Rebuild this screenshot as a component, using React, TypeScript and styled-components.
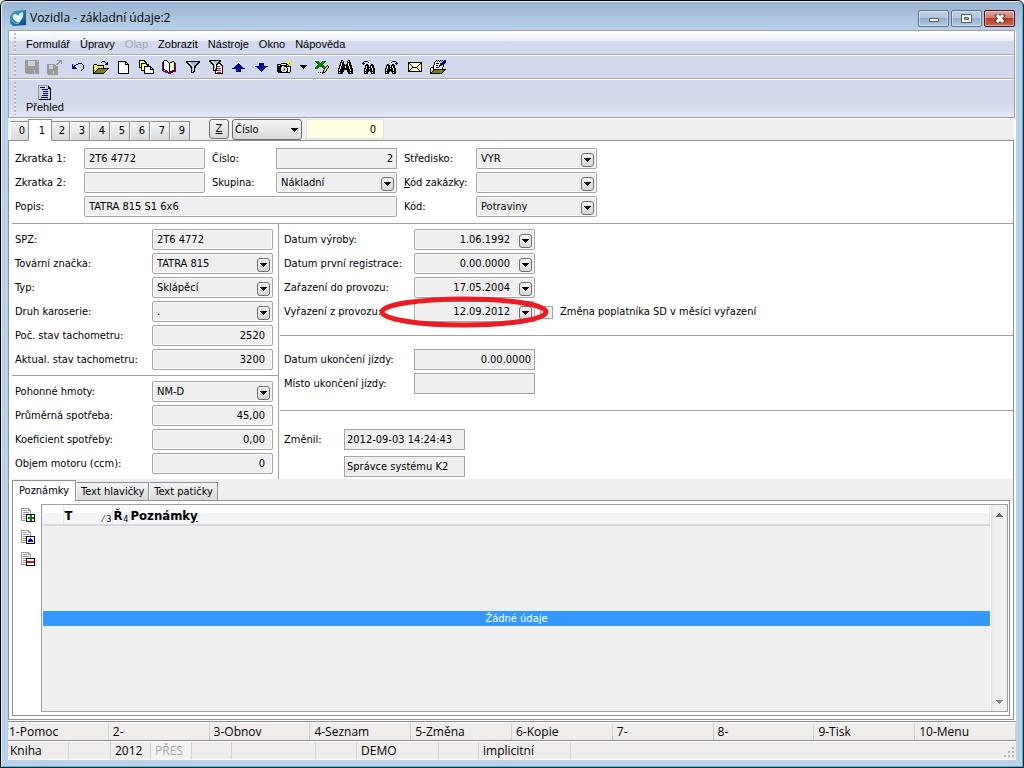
import React from "react";
import styled, { createGlobalStyle, css } from "styled-components";

const UI = `"DejaVu Sans Condensed", "DejaVu Sans", "Noto Sans", sans-serif`;
const SEGOE = `"Open Sans", "Noto Sans", sans-serif`;
const ARIAL = `"Liberation Sans", Arial, sans-serif`;

const Global = createGlobalStyle`
  * { box-sizing: border-box; }
  body { margin: 0; background: #fff; font: 11px/16px ${UI}; color: #000; }
  button, input, select { font: inherit; color: inherit; margin: 0; border-radius: 0; }
`;

/* ---------- pixel icons ---------- */

const palette: Record<string, string> = {
  k: "#000000",
  g: "#9a9a9a",
  l: "#d0d0d0",
  w: "#ffffff",
  y: "#ffff80",
  Y: "#ffe600",
  o: "#808000",
  b: "#000090",
  B: "#0000ff",
  t: "#8cc8c8",
  r: "#e01010",
  G: "#008000",
  p: "#800080",
};

const Svg = styled.svg`
  display: block;
  flex: none;
`;

function Pixels({ art }: { art: string[] }) {
  const w = Math.max(...art.map((r) => r.length));
  return (
    <Svg width={w} height={art.length} shapeRendering="crispEdges" aria-hidden="true">
      {art.flatMap((row, y) =>
        [...row].map((c, x) =>
          palette[c] ? <rect key={`${x}-${y}`} x={x} y={y} width={1} height={1} fill={palette[c]} /> : null
        )
      )}
    </Svg>
  );
}

const art: Record<string, string[]> = {
  save: [
    "gggggggggggggg",
    "ggglllllllgg.g",
    "ggglllllllgggg",
    "ggglllllllgggg",
    "ggglllllllgggg",
    "ggglllllllgggg",
    "gggggggggggggg",
    "gggggggggggggg",
    "gggggggggggggg",
    "gggggggggggggg",
    "ggggggggglgggg",
    "ggggggggglgggg",
    "ggggggggglgggg",
    ".ggggggggggggg",
  ],
  saveAs: [
    "..........ggggg",
    "............ggg",
    "...........gg.g",
    "..........gg..g",
    "gggggggg.gg....",
    "ggllllggg......",
    "ggllllggggg....",
    "ggllllggggg....",
    "ggllllggggg....",
    "ggggggggggg....",
    "ggggggggggg....",
    "gggggglgggg....",
    "gggggglgggg....",
    "gggggglgggg....",
    ".gggggggggg....",
  ],
  undo: [
    "......bbbb..",
    "b...bb....b.",
    "b.bb.......b",
    "bbb........b",
    "bbbb.......b",
    "bbbbb......b",
    "..........b.",
    ".........b..",
  ],
  open: [
    ".........kkk....",
    "........k...k.k.",
    ".............kk.",
    ".kkk........kkk.",
    "kyYykkkkkkk.....",
    "kYyYyYyYyYk.....",
    "kyYyYyYyYyk.....",
    "kYyYykkkkkkkkkkk",
    "kyYykoooooooook.",
    "kYykoooooooook..",
    "kykoooooooook...",
    "kkoooooooook....",
    "kkkkkkkkkkk.....",
  ],
  doc: [
    "kkkkkkkk...",
    "kwwwwwwkk..",
    "kwwwwwwkwk.",
    "kwwwwwwkkkk",
    "kwwwwwwwwwk",
    "kwwwwwwwwwk",
    "kwwwwwwwwwk",
    "kwwwwwwwwwk",
    "kwwwwwwwwwk",
    "kwwwwwwwwwk",
    "kwwwwwwwwwk",
    "kwwwwwwwwwk",
    "kkkkkkkkkkk",
  ],
  docs: [
    "kkkkkk.........",
    "kyyyykk........",
    "kyyyyykk.......",
    "kykkkkkk.......",
    "kykyyyykkk.....",
    "kykyyyyykk.....",
    "kykyykkkkkkk...",
    "kkkyykwwwwwkk..",
    "..kyykwwwwwkwk.",
    "..kyykwwwwwkkkk",
    "..kkkkwwwwwwwwk",
    ".....kwwwwwwwwk",
    ".....kwwwwwwwwk",
    ".....kkkkkkkkkk",
  ],
  book: [
    "..kkk..........",
    ".kwwwk....kk...",
    "pkwwwwk.kkwyk..",
    "pkwwwwwkwwyykp.",
    "pkwwwwwkwywykp.",
    "pkwwwwwkwwyykp.",
    "pkwwwwwkwywykp.",
    "pkwwwwwkwwyykp.",
    "pkwwwwwkwywykp.",
    "pkkwwwwkwwyykp.",
    "ppwkkwwkwykkkp.",
    ".ppppkwkkkpppp.",
    "...ppppkppp....",
    "......ppp......",
  ],
  filter: [
    "kkkkkkkkkkkkkk",
    "kktwttttttttkk",
    ".kktwttttttkk.",
    "..kktwttttkk..",
    "...kktwttkk...",
    "....kktwkk....",
    "....kktwkk....",
    ".....ktwk.....",
    ".....ktwk.....",
    ".....ktwk.....",
    ".....kwkk.....",
    ".....kkk......",
  ],
  filterDoc: [
    "kkkkkkkkkkkk..",
    "kktwttttttkk..",
    ".kktwttttkk...",
    "..kktwttkkkk..",
    "...kktwkkwwkk.",
    "....ktwkwwwwkk",
    "....ktwkrrrwwk",
    "....ktwkwwwwwk",
    "....ktwkrrrrwk",
    "....kwkkwwwwwk",
    "....kkkkrrrrwk",
    "......kwwwwwwk",
    "......kwrrrrwk",
    "......kkkkkkkk",
  ],
  up: [
    "......b......",
    ".....bbb.....",
    "....bbbbb....",
    "...bbbbbbb...",
    "..bbbbbbbbb..",
    "bbbbbbbbbbbbb",
    "....bbbbb....",
    "....bbbbb....",
    "....bbbbb....",
  ],
  down: [
    "....bbbbb....",
    "....bbbbb....",
    "....bbbbb....",
    "bbbbbbbbbbbbb",
    "..bbbbbbbbb..",
    "...bbbbbbb...",
    "....bbbbb....",
    ".....bbb.....",
    "......b......",
  ],
  camera: [
    "..........Y.Y.Y",
    "...........YYY.",
    "....kkkkkkYYoYY",
    "kkkkwwwwwkkYYY.",
    "kllkkkkkkkYkY.Y",
    "kkkkkwwkkkkkkk.",
    "kkkktwllwkwlwk.",
    "kkkkwlttlwkwwk.",
    "kkkkwltklwkwlk.",
    "kkkkwlttlwkwwk.",
    "kkkkkwllwkkwlk.",
    ".kkkkkkkkkkkk..",
  ],
  more: ["kkkkkkk", ".kkkkk.", "..kkk..", "...k..."],
  excel: [
    "GGGG...GGGG....",
    ".GGGG.GGGG.....",
    "..GGGGGGG......",
    "...GGGGG.......",
    "..GGGGGGG...k..",
    ".GGGGGGGGG.kYk.",
    "GGGG...GGGkYYk.",
    "GGG.....GkYYk..",
    ".........kYk...",
    "........kYYk...",
    "........kYk....",
    "...k.k.kkk.....",
    ".......k.......",
  ],
  find: [
    "...kk.....kk...",
    "...kwk...kwk...",
    "..kkkk...kkkk..",
    "..kwkk...kwkk..",
    "..kwkkk.kkwkk..",
    ".kkwkkkkkkwkkk.",
    ".kwkkkkwkkkwkk.",
    ".kwkkkkwkkkwkk.",
    "kkwkkkkkkkkwkkk",
    "kwkkkkkkkkkkwkk",
    "kwkkkk...kkkwkk",
    "kkkkkk...kkkkkk",
    "kwkkk.....kkwkk",
    "kkkkk.....kkkkk",
  ],
  findPrev: [
    "..kkkk........",
    ".k....k.......",
    "kkk...........",
    ".k..kk...kk...",
    "...kkkk.kkkk..",
    "...kwkk.kwkk..",
    "...kwkkkkwkk..",
    "..kkwkkwkkwkk.",
    "..kwkkkkkkwkk.",
    "..kwkkkkkkwkk.",
    "..kkkkk.kkkkk.",
    "..kwkk...kwkk.",
    "..kkkk...kkkk.",
  ],
  findNext: [
    ".......kkkk...",
    "......k....k..",
    "..........kkk.",
    "..kk...kk..k..",
    ".kkkk.kkkk....",
    ".kwkk.kwkk....",
    ".kwkkkkwkk....",
    "kkwkkwkkwkk...",
    "kwkkkkkkwkk...",
    "kwkkkkkkwkk...",
    "kkkkk.kkkkk...",
    "kwkk...kwkk...",
    "kkkk...kkkk...",
  ],
  mail: [
    "kkkkkkkkkkkkkk",
    "kkwywywywywykk",
    "kwkwywywywykyk",
    "kywkwywywykywk",
    "kwywkwywykwywk",
    "kywykkkkkywywk",
    "kwykywywykwywk",
    "kykwywywywkywk",
    "kkwywywywywkwk",
    "kkkkkkkkkkkkkk",
  ],
  note: [
    "......k.k.k.k.bb",
    ".....kwkwkwkwbbb",
    "....kwwwwwwwbBbb",
    "....kwkkkwkbBbb.",
    "....kwwwwwkkbb..",
    "...kwwkkwkkkwk..",
    "...kwwwwwkwwwk..",
    ".kkkwwkkkwwwk...",
    "kYykwwwwwwwwk...",
    "kyYkkkkkkkkkkkkk",
    "kYykooooooooook.",
    "kykooooooooook..",
    "kkooooooooook...",
    "kkkkkkkkkkkk....",
  ],
  overview: [
    "ggggggggggg..",
    "glllllllllkg.",
    "glbbbbblllkkg",
    "glllllllllkkk",
    "glllbbbbbbllk",
    "glllllllllllk",
    "gllllbbbbbllk",
    "glllllllllllk",
    "gllllbbbbbllk",
    "glllllllllllk",
    "glllbbbbbbllk",
    "glllllllllllk",
    "gllbbbbbbbllk",
    "glllllllllllk",
    "gkkkkkkkkkkkk",
  ],
};

function noteArt(mark: string[]) {
  const page = ["gwwwwk", "gwgggk", "gwwwwk", "gwgggk", "gwwwwk", "gggggk", ".....k"];
  return [
    "gggggggg......",
    "gwwwwwwgg.....",
    "gwggggwggg....",
    "gwwwwwwwwg....",
    "gwggggggwg....",
    "gwwwwwwwwg....",
    "gwgggkkkkkkkkk",
    ...mark.map((m, i) => page[i] + m + "k"),
  ];
}
const addArt = noteArt(["wwwGGww", "wwwGGww", "wGGGGGG", "wGGGGGG", "wwwGGww", "wwwGGww", "kkkkkkk"]);
const editArt = noteArt(["wwwwwww", "wwwBwww", "wwBBBww", "wBBBBBw", "wBBBBBw", "wwwwwww", "kkkkkkk"]);
const delArt = noteArt(["wwwwwww", "wwwwwww", "rrrrrrr", "rrrrrrr", "wwwwwww", "wwwwwww", "kkkkkkk"]);

/* ---------- window ---------- */

const Window = styled.div`
  display: flex;
  flex-direction: column;
  min-height: 100vh;
  padding: 0 7px 7px;
  border: 1px solid #0a0a0a;
  border-radius: 6px 6px 0 0;
  background: linear-gradient(#98b3d1 0, #b9d1ea 30px);
  box-shadow: inset 1px 1px 0 #e6eff8, inset -1px -1px 0 #1fcdf0;
`;

const TitleBar = styled.header`
  display: flex;
  align-items: center;
  height: 29px;
  padding: 5px 1px 0 2px;
  gap: 4px;
`;

const Title = styled.h1`
  flex: 1;
  margin: 0;
  font: 12px/18px ${SEGOE};
`;

const WinButtons = styled.div`
  display: flex;
  gap: 2px;
`;

const WinButton = styled.button<{ $close?: boolean }>`
  display: flex;
  align-items: center;
  justify-content: center;
  width: 31px;
  height: 17px;
  padding: 0;
  border: 1px solid ${(p) => (p.$close ? "#431422" : "#5d7088")};
  border-radius: 2px;
  background: ${(p) =>
    p.$close
      ? "linear-gradient(#e3a296 0, #d2796a 50%, #b83a22 50%, #cf6a4c 100%)"
      : "linear-gradient(#bdd0e5 0, #b0c6de 50%, #94afcb 50%, #b0cae4 100%)"};
  box-shadow: inset 0 0 0 1px rgba(255, 255, 255, 0.45);
`;

const Client = styled.div`
  flex: 1;
  display: flex;
  flex-direction: column;
  background: #fff;
`;

const Bars = styled.div`
  margin-right: 1px;
  border: 1px solid #a0a0a0;
  border-bottom-color: #9a9aa2;
`;

const Bar = styled.div<{ $kind: "menu" | "tools" | "big" }>`
  display: flex;
  align-items: center;
  padding-left: 5px;
  background: #d3d9ec;
  ${(p) =>
    p.$kind === "menu" &&
    css`
      height: 24px;
      border-bottom: 1px solid #a8a8a8;
      background: linear-gradient(#fff 0, #e9edf5 10px, #d3d9ec 10px);
    `}
  ${(p) =>
    p.$kind === "tools" &&
    css`
      height: 24px;
      border-top: 1px solid #fff;
      border-bottom: 1px solid #a8a8a8;
    `}
  ${(p) =>
    p.$kind === "big" &&
    css`
      height: 38px;
      border-top: 1px solid #fff;
      background: linear-gradient(#d3d9ec 60%, #e1e7f6);
    `}
`;

const Grip = styled.span`
  align-self: stretch;
  width: 2px;
  margin: 2px 0;
  background: repeating-linear-gradient(#b4b9c8 0 2px, #f4f6fb 2px 3px, transparent 3px 4px);
`;

const Menu = styled.nav`
  display: flex;
  gap: 10px;
  padding: 2px 0 0 10px;
  font: 11px/16px ${ARIAL};
`;

const MenuItem = styled.button`
  padding: 0;
  border: 0;
  background: none;
  &:disabled {
    color: #a3a8b5;
  }
`;

const Tools = styled.div`
  display: flex;
  padding-left: 4px;
`;

const ToolButton = styled.button<{ $narrow?: boolean }>`
  display: flex;
  align-items: center;
  justify-content: center;
  width: ${(p) => (p.$narrow ? 15 : 23)}px;
  height: 20px;
  padding: 0;
  border: 0;
  background: none;
`;

const BigButton = styled.button`
  display: flex;
  flex-direction: column;
  align-items: center;
  margin-left: 10px;
  padding: 2px 0 0;
  border: 0;
  background: none;
  font: 11px/14px ${ARIAL};
`;

/* ---------- page tabs ---------- */

const PageStrip = styled.div`
  display: flex;
  align-items: flex-end;
  height: 22px;
  margin: 1px 2px 0 0;
  padding-left: 2px;
  border-bottom: 1px solid #8c8e9c;
  background: #efefef;
`;

const tabFace = css<{ $active?: boolean }>`
  border: 1px solid #8c8e9c;
  border-bottom: 0;
  border-left-color: #fff;
  background: linear-gradient(#f4f4f4, #d9d9d9);
  ${(p) =>
    p.$active &&
    css`
      position: relative;
      border-left-color: #8c8e9c;
      background: #fff;
    `}
`;

const PageTab = styled.button<{ $active?: boolean }>`
  ${tabFace}
  width: ${(p) => (p.$active ? 24 : 20)}px;
  height: ${(p) => (p.$active ? 22 : 19)}px;
  margin: ${(p) => (p.$active ? "0 -2px -1px" : "0")};
  padding: 0 0 0 4px;
  line-height: 18px;
`;

const ZButton = styled.button`
  width: 20px;
  height: 20px;
  margin: 0 3px 1px 19px;
  padding: 0;
  border: 1px solid #707070;
  border-radius: 3px;
  background: linear-gradient(#f6f6f6, #d8d8d8);
  text-decoration: underline;
`;

const Stack = styled.span<{ $width?: number }>`
  display: inline-grid;
  width: ${(p) => p.$width ?? 121}px;
  align-items: center;
  & > * {
    grid-area: 1 / 1;
  }
`;

const OrderSelect = styled.select`
  width: 100%;
  height: 21px;
  padding: 0 2px;
  appearance: none;
  border: 1px solid #707070;
  border-radius: 3px;
  background: linear-gradient(#f4f4f4, #d9d9d9);
`;

const Arrow = styled.span`
  justify-self: end;
  margin-right: 4px;
  pointer-events: none;
`;

const OrderValue = styled.input`
  width: 78px;
  height: 20px;
  margin: 0 0 1px 4px;
  padding: 0 7px;
  border: 1px solid #dde1ea;
  background: #ffffe1;
  text-align: right;
`;

/* ---------- form ---------- */

const Page = styled.main`
  flex: 1;
  display: flex;
  flex-direction: column;
  margin-right: 2px;
  padding: 0 0 3px 3px;
  border: solid #8c8e9c;
  border-width: 0 1px 1px;
`;

const Head = styled.section`
  display: grid;
  grid-template-columns: 69px 121px 71px 121px 79px 121px;
  row-gap: 3px;
  padding: 7px 0 6px 3px;
  border-bottom: 1px solid #a0a0a0;
`;

const Wide = styled.div`
  grid-column: span 3;
  display: grid;
`;

const Body = styled.div`
  display: grid;
  grid-template-columns: 267px 1fr;
`;

const Left = styled.div`
  border-right: 1px solid #a0a0a0;
`;

const Right = styled.div`
  padding-left: 1px;
`;

const Group = styled.section<{ $cols: string; $pad: string; $gap?: number; $rule?: boolean }>`
  display: grid;
  grid-template-columns: ${(p) => p.$cols};
  row-gap: ${(p) => p.$gap ?? 3}px;
  padding: ${(p) => p.$pad};
  border-bottom: ${(p) => (p.$rule ? "1px solid #a0a0a0" : "0")};
`;

const Label = styled.label<{ $indent?: boolean }>`
  padding-left: ${(p) => (p.$indent ? 7 : 0)}px;
  line-height: 21px;
  white-space: nowrap;
`;

const Field = styled.input<{ $num?: boolean; $square?: boolean; $date?: boolean }>`
  width: 100%;
  height: 21px;
  padding: 0 ${(p) => (p.$date ? 24 : p.$square ? 3 : 7)}px 0 ${(p) => (p.$square ? 2 : 4)}px;
  border: 1px solid #a5a5a9;
  border-radius: ${(p) => (p.$square ? 0 : 2)}px;
  background: #efefef;
  box-shadow: ${(p) => (p.$square ? "none" : "inset 0 0 0 1px #fafafa")};
  text-align: ${(p) => (p.$num || p.$date ? "right" : "left")};
`;

const Combo = styled.select`
  width: 100%;
  height: 21px;
  padding: 0 20px 0 4px;
  appearance: none;
  border: 1px solid #a5a5a9;
  border-radius: 2px;
  background: #efefef;
  box-shadow: inset 0 0 0 1px #fafafa;
`;

const DropFace = styled.span`
  display: flex;
  align-items: center;
  justify-content: center;
  justify-self: end;
  width: 13px;
  height: 14px;
  margin: 2px 3px 0 0;
  border: 1px solid #707070;
  border-radius: 3px;
  background: linear-gradient(#f6f6f6, #d6d6d6);
  pointer-events: none;
`;

const DropButton = styled(DropFace).attrs({ as: "button" })`
  padding: 0;
  pointer-events: auto;
`;

const CheckLabel = styled.label`
  display: flex;
  align-items: center;
  gap: 7px;
  padding: 1px 0 0 5px;
  white-space: nowrap;
`;

const Check = styled.input`
  width: 13px;
  height: 13px;
  appearance: none;
  border: 1px solid #a5a5a9;
  background: #efefef;
`;

const Marked = styled(Stack)`
  position: relative;
`;

const Ring = styled.svg`
  position: absolute;
  left: -36px;
  top: -5px;
  pointer-events: none;
`;

/* ---------- notes ---------- */

const NoteTabs = styled.div`
  display: flex;
  align-items: flex-end;
  height: 21px;
  background: #efefef;
`;

const NoteTab = styled.button<{ $active?: boolean }>`
  ${tabFace}
  height: ${(p) => (p.$active ? 21 : 18)}px;
  margin-bottom: ${(p) => (p.$active ? "-1px" : "0")};
  padding: 0 ${(p) => (p.$active ? "6px" : "4px")};
  line-height: 16px;
`;

const NotePanel = styled.section`
  flex: 1;
  display: flex;
  margin-right: 3px;
  padding: 3px 1px 3px 0;
  border: 1px solid #8c8e9c;
`;

const NoteTools = styled.div`
  display: flex;
  flex-direction: column;
  gap: 8px;
  width: 28px;
  padding: 4px 0 0 8px;
`;

const NoteButton = styled.button`
  width: 14px;
  height: 14px;
  padding: 0;
  border: 0;
  background: none;
`;

const Listing = styled.div`
  flex: 1;
  display: flex;
  border: 1px solid #a0a0a0;
  background: #efefef;
`;

const ListMain = styled.div`
  flex: 1;
  display: flex;
  flex-direction: column;
  padding-left: 1px;
`;

const HeadTable = styled.table`
  width: 100%;
  height: 21px;
  table-layout: fixed;
  border-collapse: collapse;
  border-bottom: 2px solid #d9d9d9;
  background: linear-gradient(#fff 40%, #f2f4f7 40%);
  font: bold 13px/16px ${UI};
  th {
    padding: 3px 0 0 1px;
    text-align: left;
    border-right: 1px solid #e6e8ec;
    white-space: nowrap;
  }
`;

const HeadCell = styled.span`
  display: flex;
  justify-content: space-between;
  align-items: flex-end;
  height: 16px;
`;

const SortMark = styled.small`
  font: 9px/10px ${UI};
`;

const EmptyArea = styled.div`
  flex: 1;
  display: flex;
  flex-direction: column;
  justify-content: center;
`;

const EmptyRow = styled.div`
  background: #3399ff;
  color: #fff;
  line-height: 15px;
  text-align: center;
`;

const Scroll = styled.div`
  display: flex;
  flex-direction: column;
  justify-content: space-between;
  align-items: center;
  width: 17px;
  padding: 8px 0 7px;
  border-left: 1px solid #fafafa;
  background: linear-gradient(90deg, #e6e6e6, #f0f0f0 30%, #efefef);
`;

/* ---------- status ---------- */

const Status = styled.footer`
  margin-top: 1px;
  border-top: 1px solid #8a8a92;
  font: 12px/16px ${SEGOE};
`;

const Keys = styled.div`
  display: grid;
  grid-template-columns: repeat(10, 1fr);
  height: 19px;
  border: solid;
  border-color: #fff #fff #8a8a92;
  border-width: 1px 0;
  background: #f0eceb;
`;

const Key = styled.button`
  padding: 0 0 0 4px;
  border: 0;
  border-right: 1px solid #d2cfcf;
  background: none;
  text-align: left;
  &:first-child {
    padding-left: 1px;
  }
`;

const Info = styled.div`
  display: grid;
  grid-template-columns: 61px 42px 40px 41px 40px 84px 41px 82px 40px 92px 1fr;
  height: 19px;
  border: solid #fff;
  border-width: 1px 0;
  background: #f0eceb;
  line-height: 17px;
`;

const InfoCell = styled.span<{ $dim?: boolean }>`
  padding-left: 4px;
  border-right: 1px solid #d2cfcf;
  color: ${(p) => (p.$dim ? "#a8a8a8" : "#000")};
  background: ${(p) => (p.$dim ? "#f2f2f2" : "none")};
  &:first-child {
    padding-left: 2px;
  }
  &:last-child {
    display: flex;
    justify-content: flex-end;
    align-items: flex-end;
    border: 0;
  }
`;

/* ---------- pieces ---------- */

const Triangle = ({ up, color = "#000" }: { up?: boolean; color?: string }) => (
  <Svg width="7" height="4" shapeRendering="crispEdges" aria-hidden="true">
    <path
      d={up ? "M3 0h1v1h1v1h1v1h1v1H0v-1h1v-1h1v-1h1z" : "M0 0h7v1H6v1H5v1H4v1H3V3H2V2H1V1H0z"}
      fill={color}
    />
  </Svg>
);

type TextRowProps = {
  id: string;
  label: React.ReactNode;
  value: string;
  $num?: boolean;
  $square?: boolean;
  $indent?: boolean;
};

function TextRow({ id, label, value, $indent, ...field }: TextRowProps) {
  return (
    <>
      <Label htmlFor={id} $indent={$indent}>{label}</Label>
      <Field id={id} defaultValue={value} {...field} />
    </>
  );
}

function ComboRow({ id, label, value, $indent }: { id: string; label: React.ReactNode; value: string; $indent?: boolean }) {
  return (
    <>
      <Label htmlFor={id} $indent={$indent}>{label}</Label>
      <Stack>
        <Combo id={id} defaultValue={value}>
          <option>{value}</option>
        </Combo>
        <DropFace><Triangle /></DropFace>
      </Stack>
    </>
  );
}

function DateRow({ id, label, value, marked, children }: { id: string; label: string; value: string; marked?: boolean; children?: React.ReactNode }) {
  const Box = marked ? Marked : Stack;
  return (
    <>
      <Label htmlFor={id}>{label}</Label>
      <Box>
        <Field id={id} defaultValue={value} $date />
        <DropButton aria-label={label}><Triangle /></DropButton>
        {marked && (
          <Ring width="172" height="32" aria-hidden="true">
            <ellipse cx="86" cy="16" rx="82" ry="13" fill="none" stroke="#ed1c24" strokeWidth="5" />
          </Ring>
        )}
      </Box>
      {children ?? <span />}
    </>
  );
}

const menu = ["Formulář", "Úpravy", "Olap", "Zobrazit", "Nástroje", "Okno", "Nápověda"];
const tools: [string, string][] = [
  ["save", "Uložit"], ["saveAs", "Uložit jako"], ["undo", "Zpět"], ["open", "Otevřít"], ["doc", "Nový"],
  ["docs", "Kopie"], ["book", "Kniha"], ["filter", "Filtr"], ["filterDoc", "Filtr záznamů"], ["up", "Předchozí"],
  ["down", "Další"], ["camera", "Snímek"], ["more", "Více"], ["excel", "Excel"], ["find", "Hledat"],
  ["findPrev", "Hledat předchozí"], ["findNext", "Hledat další"], ["mail", "Pošta"], ["note", "Poznámka"],
];
const pages = ["0", "1", "2", "3", "4", "5", "6", "7", "9"];
const keys = ["1-Pomoc", "2-", "3-Obnov", "4-Seznam", "5-Změna", "6-Kopie", "7-", "8-", "9-Tisk", "10-Menu"];
const info = ["Kniha", "", "2012", "PŘES", "", "", "", "DEMO", "", "implicitní"];

export default function App() {
  return (
    <>
      <Global />
      <Window>
        <TitleBar>
          <Svg width="16" height="16" aria-hidden="true">
            <defs>
              <linearGradient id="logo" x1="0" y1="0" x2="1" y2="1">
                <stop offset="0" stopColor="#3fb0dc" />
                <stop offset="1" stopColor="#0a3f86" />
              </linearGradient>
            </defs>
            <path d="M4 1L16 0V15L3 16L0 13V6z" fill="url(#logo)" />
            <path d="M9 13C4 11 2 8 3 5C5 3 7 4 8 6C9 3 12 1 13 3C14 6 12 9 9 13z" fill="#e4f5fc" />
            <path d="M2 10C4 13 6 14 9 13" fill="none" stroke="#7fd0ec" />
          </Svg>
          <Title>Vozidla - základní údaje:2</Title>
          <WinButtons>
            <WinButton aria-label="Minimalizovat">
              <Svg width="12" height="10"><path d="M1.500 5.500h9v3h-9z" fill="#fff" stroke="#4f5d70" /></Svg>
            </WinButton>
            <WinButton aria-label="Maximalizovat">
              <Svg width="11" height="9">
                <path d="M.5.5h10v8H.5z" fill="#fff" stroke="#4f5d70" />
                <path d="M3.500 3.500h4v2h-4z" fill="#9fb6cf" stroke="#4f5d70" />
              </Svg>
            </WinButton>
            <WinButton aria-label="Zavřít" $close>
              <Svg width="12" height="9">
                <path d="M2 0L10 9M10 0L2 9" stroke="#4a4a5c" strokeWidth="5" />
                <path d="M3 1L9 8M9 1L3 8" stroke="#fff" strokeWidth="3" />
              </Svg>
            </WinButton>
          </WinButtons>
        </TitleBar>

        <Client>
          <Bars>
            <Bar $kind="menu">
              <Grip />
              <Menu>
                {menu.map((m) => <MenuItem key={m} disabled={m === "Olap"}>{m}</MenuItem>)}
              </Menu>
            </Bar>
            <Bar $kind="tools">
              <Grip />
              <Tools>
                {tools.map(([id, name]) => (
                  <ToolButton key={id} aria-label={name} $narrow={id === "more"}><Pixels art={art[id]} /></ToolButton>
                ))}
              </Tools>
            </Bar>
            <Bar $kind="big">
              <Grip />
              <BigButton><Pixels art={art.overview} />Přehled</BigButton>
            </Bar>
          </Bars>

          <PageStrip>
            {pages.map((p) => <PageTab key={p} $active={p === "1"}>{p}</PageTab>)}
            <ZButton>Z</ZButton>
            <Stack $width={70}>
              <OrderSelect aria-label="Řazení" defaultValue="Číslo"><option>Číslo</option></OrderSelect>
              <Arrow><Triangle /></Arrow>
            </Stack>
            <OrderValue aria-label="Hodnota" defaultValue="0" />
          </PageStrip>

          <Page>
            <Head>
              <TextRow id="z1" label="Zkratka 1:" value="2T6 4772" />
              <TextRow id="cislo" label="Číslo:" value="2" $num $square $indent />
              <ComboRow id="str" label="Středisko:" value="VYR" $indent />
              <TextRow id="z2" label="Zkratka 2:" value="" />
              <ComboRow id="skup" label="Skupina:" value="Nákladní" $indent />
              <ComboRow id="zak" label={<><u>K</u>ód zakázky:</>} value="" $indent />
              <Label htmlFor="popis">Popis:</Label>
              <Wide><Field id="popis" defaultValue="TATRA 815 S1 6x6" /></Wide>
              <ComboRow id="kod" label="Kód:" value="Potraviny" $indent />
            </Head>

            <Body>
              <Left>
                <Group $cols="137px 121px" $pad="5px 0 5px 3px" $rule>
                  <TextRow id="spz" label="SPZ:" value="2T6 4772" />
                  <ComboRow id="znacka" label="Tovární značka:" value="TATRA 815" />
                  <ComboRow id="typ" label="Typ:" value="Sklápěcí" />
                  <ComboRow id="druh" label="Druh karoserie:" value="." />
                  <TextRow id="poc" label="Poč. stav tachometru:" value="2520" $num />
                  <TextRow id="akt" label="Aktual. stav tachometru:" value="3200" $num />
                </Group>
                <Group $cols="137px 121px" $pad="5px 0 5px 3px">
                  <ComboRow id="phm" label="Pohonné hmoty:" value="NM-D" />
                  <TextRow id="prum" label="Průměrná spotřeba:" value="45,00" $num />
                  <TextRow id="koef" label="Koeficient spotřeby:" value="0,00" $num />
                  <TextRow id="objem" label="Objem motoru (ccm):" value="0" $num />
                </Group>
              </Left>
              <Right>
                <Group $cols="130px 121px 1fr" $pad="5px 0 13px 4px" $rule>
                  <DateRow id="dv" label="Datum výroby:" value="1.06.1992" />
                  <DateRow id="dr" label="Datum první registrace:" value="0.00.0000" />
                  <DateRow id="dz" label="Zařazení do provozu:" value="17.05.2004" />
                  <DateRow id="dp" label="Vyřazení z provozu:" value="12.09.2012" marked>
                    <CheckLabel><Check type="checkbox" />Změna poplatníka SD v měsíci vyřazení</CheckLabel>
                  </DateRow>
                </Group>
                <Group $cols="130px 121px" $pad="13px 0 16px 4px" $rule>
                  <TextRow id="du" label="Datum ukončení jízdy:" value="0.00.0000" $num $square />
                  <TextRow id="mu" label="Místo ukončení jízdy:" value="" $square />
                </Group>
                <Group $cols="60px 121px" $pad="18px 0 2px 4px" $gap={6}>
                  <TextRow id="zm" label="Změnil:" value="2012-09-03 14:24:43" $square />
                  <span />
                  <Field aria-label="Změnil uživatel" defaultValue="Správce systému K2" $square />
                </Group>
              </Right>
            </Body>

            <NoteTabs>
              <NoteTab $active>Poznámky</NoteTab>
              <NoteTab>Text hlavičky</NoteTab>
              <NoteTab>Text patičky</NoteTab>
            </NoteTabs>
            <NotePanel>
              <NoteTools>
                <NoteButton aria-label="Přidat"><Pixels art={addArt} /></NoteButton>
                <NoteButton aria-label="Změnit"><Pixels art={editArt} /></NoteButton>
                <NoteButton aria-label="Smazat"><Pixels art={delArt} /></NoteButton>
              </NoteTools>
              <Listing>
                <ListMain>
                  <HeadTable>
                    <colgroup>
                      <col style={{ width: 20 }} />
                      <col style={{ width: 49 }} />
                      <col style={{ width: 17 }} />
                      <col />
                    </colgroup>
                    <thead>
                      <tr>
                        <th />
                        <th><HeadCell>T<SortMark>⁄ 3</SortMark></HeadCell></th>
                        <th><HeadCell>Ř<SortMark>4</SortMark></HeadCell></th>
                        <th>Poznámk<u>y</u></th>
                      </tr>
                    </thead>
                  </HeadTable>
                  <EmptyArea><EmptyRow>Žádné údaje</EmptyRow></EmptyArea>
                </ListMain>
                <Scroll>
                  <Triangle up color="#707070" />
                  <Triangle color="#8a8a8a" />
                </Scroll>
              </Listing>
            </NotePanel>
          </Page>

          <Status>
            <Keys>{keys.map((k) => <Key key={k}>{k}</Key>)}</Keys>
            <Info>
              {info.map((t, i) => <InfoCell key={i} $dim={t === "PŘES"}>{t}</InfoCell>)}
              <InfoCell>
                <Svg width="12" height="12" aria-hidden="true" shapeRendering="crispEdges">
                  {[[8, 0], [8, 4], [8, 8], [4, 4], [4, 8], [0, 8]].map(([x, y]) => (
                    <rect key={`${x}-${y}`} x={x} y={y} width="2" height="2" fill="#b8b8b8" />
                  ))}
                </Svg>
              </InfoCell>
            </Info>
          </Status>
        </Client>
      </Window>
    </>
  );
}
